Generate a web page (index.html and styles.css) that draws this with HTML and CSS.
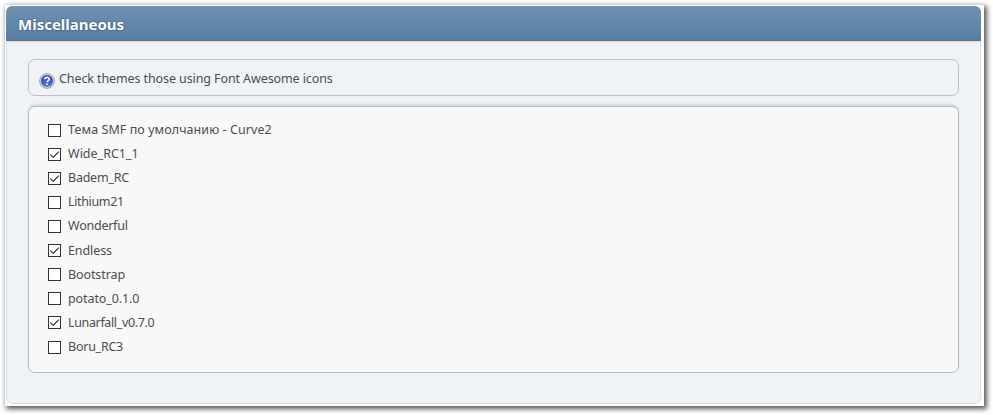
FILE: index.html
```
<!DOCTYPE html>
<html lang="en">
<head>
<meta charset="utf-8">
<title>Miscellaneous</title>
<link rel="stylesheet" href="styles.css">
</head>
<body>
<div class="card">
  <section class="panel">
    <h3 class="title">Miscellaneous</h3>
    <div class="content">
      <div class="info">
        <svg class="help" width="16" height="16" viewBox="0 0 16 16">
          <defs><linearGradient id="blue" x1="0" y1="0" x2="0" y2="1"><stop offset="0" stop-color="#2947a9"/><stop offset="1" stop-color="#4f7be6"/></linearGradient></defs>
          <circle cx="8" cy="8" r="7.4" fill="#d8d8dc" stroke="#a2a2a5"/>
          <circle cx="8" cy="8" r="6.1" fill="url(#blue)"/>
          <path d="M5.9 6.3C5.9 3.8 10.2 3.8 10.2 6.2C10.2 7.6 8.1 7.6 8.1 9.3M8.1 10.6V12.1" fill="none" stroke="#fff" stroke-width="1.6"/>
        </svg>
        <span class="info-text">Check themes those using Font Awesome icons</span>
      </div>
      <div class="themes">
        <label class="row"><input type="checkbox"><span class="loose">Тема SMF по умолчанию - Curve2</span></label>
        <label class="row"><input type="checkbox" checked><span class="normal">Wide_RC1_1</span></label>
        <label class="row"><input type="checkbox" checked><span class="tight">Badem_RC</span></label>
        <label class="row"><input type="checkbox"><span class="tighter">Lithium21</span></label>
        <label class="row"><input type="checkbox"><span class="tight">Wonderful</span></label>
        <label class="row"><input type="checkbox" checked><span>Endless</span></label>
        <label class="row"><input type="checkbox"><span>Bootstrap</span></label>
        <label class="row"><input type="checkbox"><span>potato_0.1.0</span></label>
        <label class="row"><input type="checkbox" checked><span class="tighter">Lunarfall_v0.7.0</span></label>
        <label class="row"><input type="checkbox"><span class="tight">Boru_RC3</span></label>
      </div>
    </div>
  </section>
</div>
</body>
</html>
```
FILE: styles.css
```
* { box-sizing: border-box; }
body {
  margin: 0;
  padding: 5px 9px 9px 5px;
  height: 415px;
  overflow: hidden;
  background: #fff;
  color: #4d4d4d;
  font: 12.5px/18px "Noto Sans", "Open Sans", sans-serif;
  letter-spacing: -.1px;
}
.card {
  height: 401px;
  padding: 1px 3px 2px 1px;
  background: #fff;
  box-shadow: 2px 2px 5px 1px rgba(0, 0, 0, .65);
}
.panel {
  height: 398px;
  display: flex;
  flex-direction: column;
}
.title {
  margin: 0;
  height: 35px;
  padding: 0 12px;
  border-bottom: 1px solid #6f7277;
  border-radius: 6px 6px 0 0;
  background: linear-gradient(#7092b0, #557ea3);
  color: #fff;
  font-size: 15px;
  line-height: 36px;
  font-weight: 700;
  letter-spacing: 0;
  text-shadow: 0 0 2px rgba(20, 40, 70, .65);
}
.content {
  flex: 1;
  padding: 17px 21px;
  border: 1px solid #d9dcde;
  border-radius: 0 0 7px 7px;
  background: #eff3f6;
}
.info {
  display: flex;
  align-items: center;
  height: 37px;
  padding: 2px 10px 0;
  border: 1px solid #bfc2c4;
  border-radius: 7px;
}
.help { margin: 4px 4px 0 0; }
.themes {
  height: 267px;
  margin-top: 10px;
  padding: 10px 19px;
  border: 1px solid #bcbcbc;
  border-radius: 7px;
  background: #f8f8f8;
  box-shadow: 0 -2px 2px rgba(0, 0, 0, .1);
}
.row {
  display: flex;
  align-items: center;
  height: 24.12px;
}
.row span { margin-top: 2px; }
.loose { letter-spacing: .07px; }
.normal { letter-spacing: 0; }
.tight { letter-spacing: -.24px; }
.tighter { letter-spacing: -.36px; }
input {
  appearance: none;
  width: 13px;
  height: 13px;
  margin: 2px 7px 0 0;
  border: 1px solid #333;
  background: #fff;
}
input:checked {
  background: #fff url("data:image/svg+xml,%3Csvg xmlns='http://www.w3.org/2000/svg' viewBox='0 0 11 11'%3E%3Cpath d='M1.3 5.4 4.2 8.3 9.8 2.7' fill='none' stroke='%23333' stroke-width='1.2'/%3E%3C/svg%3E") center / 11px 11px no-repeat;
}
```
